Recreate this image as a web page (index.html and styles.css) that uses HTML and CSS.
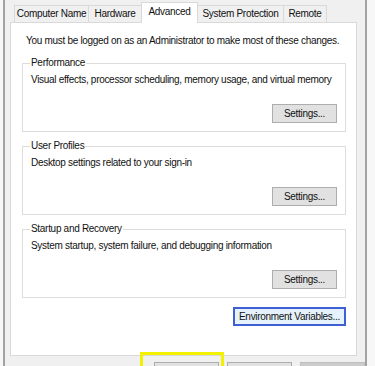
FILE: index.html
```html
<!DOCTYPE html>
<html lang="en">
<head>
    <meta charset="UTF-8">
    <meta name="viewport" content="width=device-width, initial-scale=1.0">
    <title>System Properties</title>
    <link rel="stylesheet" href="styles.css">
</head>
<body>

    <div class="window">
        <div class="tabs">
            <div class="tab">Computer Name</div>
            <div class="tab">Hardware</div>
            <div class="tab active">Advanced</div>
            <div class="tab">System Protection</div>
            <div class="tab">Remote</div>
        </div>

        <div class="page">
            <p class="intro">You must be logged on as an Administrator to make most of these changes.</p>

            <fieldset class="group">
                <legend>Performance</legend>
                <p>Visual effects, processor scheduling, memory usage, and virtual memory</p>
                <div class="actions"><button class="btn">Settings...</button></div>
            </fieldset>

            <fieldset class="group">
                <legend>User Profiles</legend>
                <p>Desktop settings related to your sign-in</p>
                <div class="actions"><button class="btn">Settings...</button></div>
            </fieldset>

            <fieldset class="group">
                <legend>Startup and Recovery</legend>
                <p>System startup, system failure, and debugging information</p>
                <div class="actions"><button class="btn">Settings...</button></div>
            </fieldset>

            <div class="env-row">
                <button class="btn default">Environment Variables...</button>
            </div>
        </div>

        <div class="dialog-buttons">
            <button class="btn">OK</button>
            <button class="btn">Cancel</button>
            <button class="btn" disabled>Apply</button>
        </div>

        <!-- yellow marker drawn over the OK button -->
        <div class="highlight"></div>
    </div>

</body>
</html>
```

FILE: styles.css
```css
body {
    margin: 0;
    background-color: #f7f7f7;
    font-family: 'Liberation Sans', Arial, sans-serif;
    font-size: 10px;
    letter-spacing: -0.3px;
    color: #111;
    overflow: hidden;
}

.window {
    position: relative;
    width: 364px;
    height: 366px;
    margin-left: 3px;
    padding: 2px 0 0 0;
    box-sizing: border-box;
    background-color: #f0f0f0;
    border-left: 2px solid #a3a3a3;
    border-right: 2px solid #a3a3a3;
    overflow: hidden;
}

.tabs {
    display: flex;
    align-items: flex-end;
    margin-left: 9px;
    height: 20px;
}

.tab {
    box-sizing: border-box;
    height: 17px;
    line-height: 16px;
    text-align: center;
    border: 1px solid #d9d9d9;
    border-bottom: none;
    margin-right: -1px;
    background-color: #f0f0f0;
    white-space: nowrap;
}

.tab:nth-child(1) { width: 75px; }
.tab:nth-child(2) { width: 54px; }
.tab:nth-child(3) { width: 57px; }
.tab:nth-child(4) { width: 87px; }
.tab:nth-child(5) { width: 44px; }

.tab.active {
    position: relative;
    z-index: 1;
    height: 21px;
    line-height: 18px;
    background-color: #fff;
    margin-bottom: -1px;
}

.page {
    margin-left: 5px;
    width: 347px;
    height: 334px;
    box-sizing: border-box;
    background-color: #fff;
    border: 1px solid #d9d9d9;
    padding: 10px 10px 0 11px;
}

.intro {
    margin: 1px 0 8px 4px;
    line-height: 14px;
}

.group {
    margin: 0 0 7px 0;
    padding: 1px 8px 8px 8px;
    border: 1px solid #dcdcdc;
}

.group legend {
    padding: 0 1px;
    margin-left: -1px;
    line-height: 14px;
}

.group p {
    margin: 2px 0 0 0;
    line-height: 14px;
}

.actions {
    display: flex;
    justify-content: flex-end;
    margin-top: 17px;
}

.btn {
    font-family: inherit;
    font-size: 10px;
    letter-spacing: -0.3px;
    color: #111;
    height: 19px;
    padding: 0 8px;
    width: 65px;
    background-color: #e1e1e1;
    border: 1px solid #adadad;
    border-radius: 0;
}

.btn.default {
    width: auto;
    border: 2px solid #3f5fd5;
    background-color: #e5f1fb;
    padding: 0 4px;
    height: 19px;
}

.env-row {
    display: flex;
    justify-content: flex-end;
    margin-top: 9px;
}

.dialog-buttons {
    display: flex;
    align-items: flex-start;
    gap: 8px;
    padding-left: 149px;
    margin-top: 6px;
}

.dialog-buttons .btn {
    flex: none;
    width: 65px;
    height: 23px;
    padding-top: 8px;
}

.dialog-buttons .btn:disabled {
    background-color: #cccccc;
    border-color: #bfbfbf;
    color: #838383;
}

.highlight {
    position: absolute;
    left: 135px;
    top: 352px;
    width: 84px;
    height: 20px;
    box-sizing: border-box;
    border: 3px solid #f2f200;
}
```
